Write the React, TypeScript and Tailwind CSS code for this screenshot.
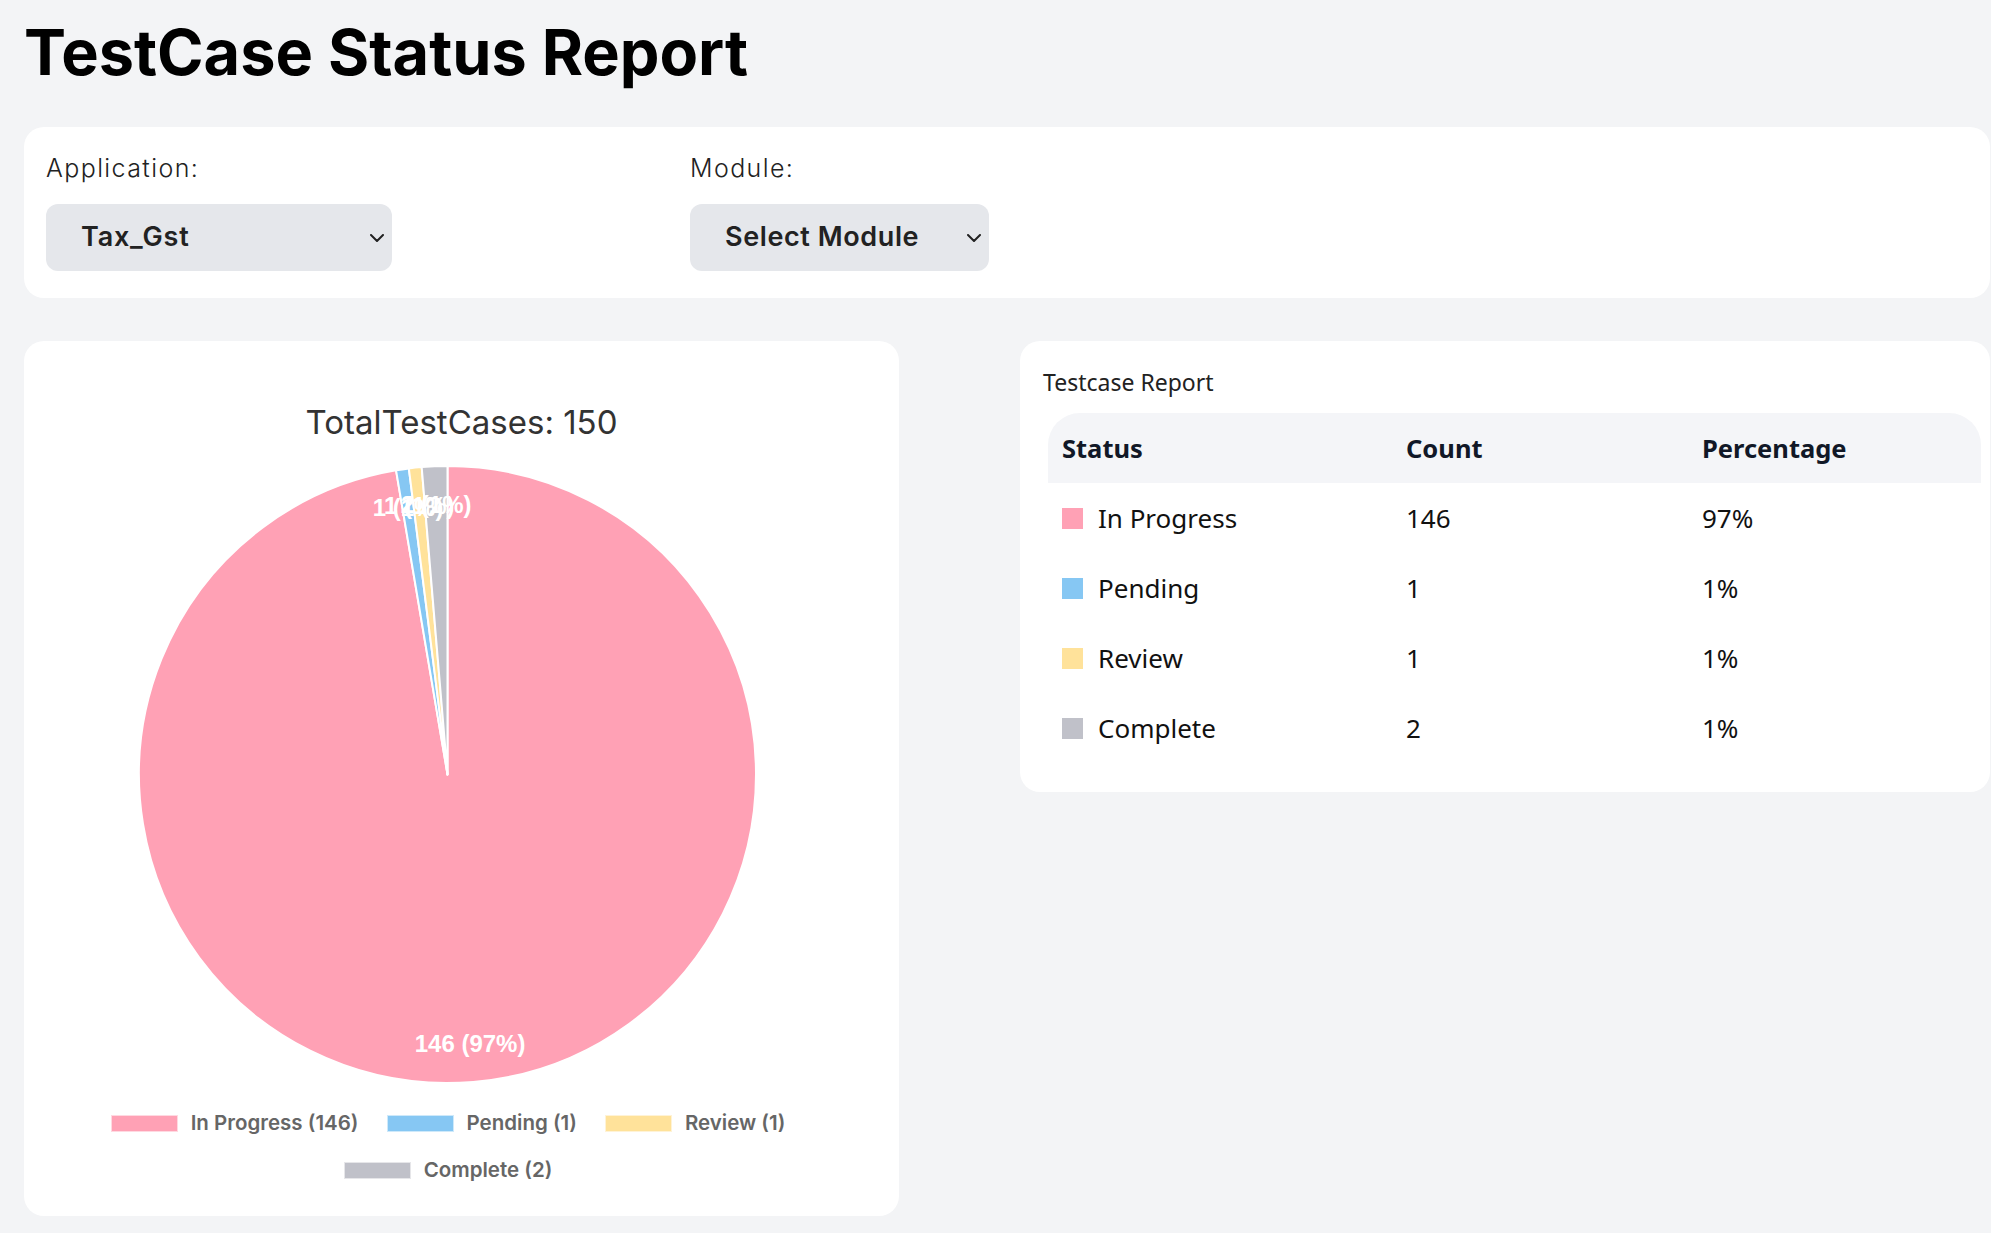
import React from "react";

type Slice = { label: string; count: number; pct: string; color: string };

const slices: Slice[] = [
  { label: "In Progress", count: 146, pct: "97%", color: "#FFA1B5" },
  { label: "Pending", count: 1, pct: "1%", color: "#86C7F3" },
  { label: "Review", count: 1, pct: "1%", color: "#FFE29A" },
  { label: "Complete", count: 2, pct: "1%", color: "#C0C1C9" },
];

const total = slices.reduce((s, x) => s + x.count, 0);

function Chevron() {
  return (
    <svg width="14" height="8" viewBox="0 0 14 8" className="shrink-0">
      <polyline points="1,1 7,7 13,1" fill="none" stroke="#222" strokeWidth="2" strokeLinecap="round" strokeLinejoin="round" />
    </svg>
  );
}

function Pie() {
  const cx = 423.5;
  const cy = 332.5;
  const r = 308.5;
  let acc = 0;
  const arcs = slices.map((s) => {
    const a0 = (acc / total) * Math.PI * 2 - Math.PI / 2;
    acc += s.count;
    const a1 = (acc / total) * Math.PI * 2 - Math.PI / 2;
    const x0 = cx + r * Math.cos(a0);
    const y0 = cy + r * Math.sin(a0);
    const x1 = cx + r * Math.cos(a1);
    const y1 = cy + r * Math.sin(a1);
    const large = a1 - a0 > Math.PI ? 1 : 0;
    const mid = (a0 + a1) / 2;
    const d = 270;
    return {
      path: `M ${cx} ${cy} L ${x0} ${y0} A ${r} ${r} 0 ${large} 1 ${x1} ${y1} Z`,
      color: s.color,
      lx: cx + d * Math.cos(mid),
      ly: cy + d * Math.sin(mid),
      text: `${s.count} (${s.pct})`,
    };
  });
  return (
    <svg width="875" height="660" viewBox="0 0 875 660" className="block">
      {arcs.map((a, i) => (
        <path key={i} d={a.path} fill={a.color} stroke="#ffffff" strokeWidth="2" strokeLinejoin="round" />
      ))}
      {arcs.map((a, i) => (
        <text
          key={"t" + i}
          x={a.lx}
          y={a.ly}
          textAnchor="middle"
          dominantBaseline="central"
          fill="#ffffff"
          fontFamily="'Liberation Sans', Arial, sans-serif"
          fontWeight="bold"
          fontSize="24"
        >
          {a.text}
        </text>
      ))}
    </svg>
  );
}

export default function App() {
  return (
    <div className="min-h-screen w-full overflow-hidden bg-[#f3f4f6] font-['Inter',sans-serif]">
      <h1 className="pl-6 pt-[21px] text-[63px] font-bold leading-[62px] text-black">TestCase Status Report</h1>

      <div className="ml-6 mt-[44px] w-[1966px] rounded-[20px] bg-white pl-[22px] pt-[25px] pb-[27px]">
        <div className="flex">
          <div className="flex w-[644px] flex-col">
            <label className="text-[25px] font-light leading-[32px] tracking-[1.4px] text-[#222]">Application:</label>
            <div className="mt-[20px] flex h-[67px] w-[346px] items-center justify-between rounded-xl bg-[#e5e7eb] pl-[35px] pr-[8px]">
              <span className="text-[27px] font-semibold tracking-[0.8px] text-[#222]">Tax_Gst</span>
              <Chevron />
            </div>
          </div>
          <div className="flex flex-col">
            <label className="text-[25px] font-light leading-[32px] tracking-[1.4px] text-[#222]">Module:</label>
            <div className="mt-[20px] flex h-[67px] w-[299px] items-center justify-between rounded-xl bg-[#e5e7eb] pl-[35px] pr-[8px]">
              <span className="text-[27px] font-semibold tracking-[0.6px] text-[#222]">Select Module</span>
              <Chevron />
            </div>
          </div>
        </div>
      </div>

      <div className="ml-6 mt-[43px] flex items-start gap-[121px]">
        <div className="flex w-[875px] flex-col rounded-[20px] bg-white pt-[61px] pb-[34px]">
          <div className="text-center text-[33px] font-normal leading-[40px] text-[#333]">TotalTestCases: 150</div>
          <Pie />
          <div className="mt-[9px] flex w-[848px] flex-wrap justify-center gap-x-[28px] gap-y-[23px]">
            {slices.map((s) => (
              <div key={s.label} className="flex items-center gap-[13px]">
                <span className="h-[17px] w-[67px] border border-white/60" style={{ backgroundColor: s.color }} />
                <span className="text-[20.5px] font-semibold leading-[24px] text-[#666]">
                  {s.label} ({s.count})
                </span>
              </div>
            ))}
          </div>
        </div>

        <div className="w-[970px] rounded-[20px] bg-white pl-[23px] pr-[9px] pt-[25px] pb-[29px] font-['Noto_Sans',sans-serif]">
          <div className="text-[23px] leading-[32px] text-[#222]">Testcase Report</div>
          <div className="ml-[5px] mt-[15px]">
            <div className="grid h-[70px] grid-cols-[344px_296px_1fr] items-center rounded-t-[32px] bg-[#f4f5f8] pl-[14px] text-[25.5px] font-bold text-[#111827]">
              <div>Status</div>
              <div>Count</div>
              <div>Percentage</div>
            </div>
            {slices.map((s) => (
              <div key={s.label} className="grid h-[70px] grid-cols-[344px_296px_1fr] items-center pl-[14px] text-[26px] text-[#111]">
                <div className="flex items-center gap-[15px]">
                  <span className="h-[21px] w-[21px]" style={{ backgroundColor: s.color }} />
                  <span>{s.label}</span>
                </div>
                <div>{s.count}</div>
                <div>{s.pct}</div>
              </div>
            ))}
          </div>
        </div>
      </div>
    </div>
  );
}
